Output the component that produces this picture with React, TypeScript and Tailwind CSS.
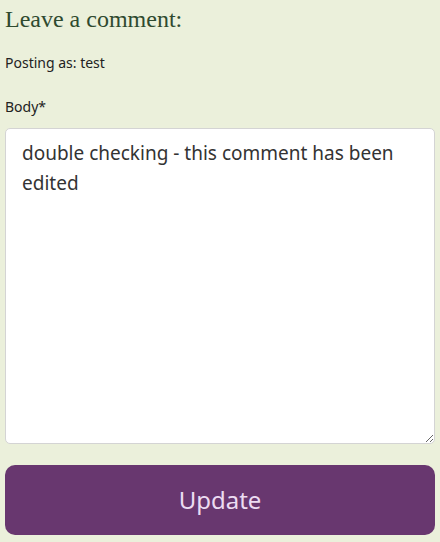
export default function App() {
  return (
    <div className="w-[440px] h-[542px] bg-[#ebf0db] px-[5px] pt-[5px] overflow-hidden" style={{ fontFamily: '"Noto Sans", "Open Sans", sans-serif' }}>
      <h2 className="text-[24px] leading-[28px] text-[#2f4a2f]" style={{ fontFamily: '"Liberation Serif", serif' }}>
        Leave a comment:
      </h2>
      <p className="mt-[20px] text-[14px] leading-[20px] text-[#222]">Posting as: test</p>
      <label className="block mt-[24px] text-[14px] leading-[20px] text-[#222]">Body*</label>
      <textarea
        className="block mt-[11px] w-full h-[316px] bg-white border border-[#d4d4d4] rounded-[5px] px-[16px] py-[9px] text-[19px] leading-[30px] text-[#333] outline-none"
        defaultValue="double checking - this comment has been edited"
      />
      <button className="mt-[21px] w-full h-[70px] rounded-[10px] bg-[#68376f] text-[#ecdcf2] text-[24px]">
        Update
      </button>
    </div>
  );
}
